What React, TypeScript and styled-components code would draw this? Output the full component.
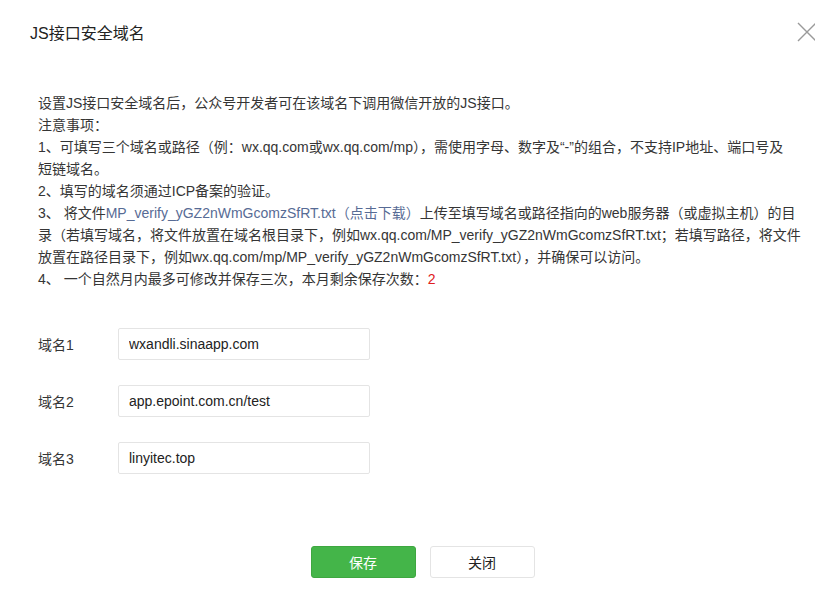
import styled, { createGlobalStyle } from "styled-components";

const Global = createGlobalStyle`
	body {
		margin: 0;
		background: #fff;
		font-family: "Liberation Sans", "Noto Sans CJK SC", sans-serif;
		color: #353535;
	}
`;

const fields = ["wxandli.sinaapp.com", "app.epoint.com.cn/test", "linyitec.top"];

function App() {
	return (
		<Dialog>
			<Global />
			<Header>
				<h3>JS接口安全域名</h3>
				<Close aria-label="关闭">
					<svg width="20" height="20" viewBox="0 0 20 20">
						<path d="M1 1L19 19M19 1L1 19" stroke="#9a9a9a" strokeWidth="1.4" fill="none" />
					</svg>
				</Close>
			</Header>
			<Notice>
				<Line>设置JS接口安全域名后，公众号开发者可在该域名下调用微信开放的JS接口。</Line>
				<Line>注意事项：</Line>
				<Line>1、可填写三个域名或路径（例：wx.qq.com或wx.qq.com/mp），需使用字母、数字及“-”的组合，不支持IP地址、端口号及</Line>
				<Line>短链域名。</Line>
				<Line>2、填写的域名须通过ICP备案的验证。</Line>
				<Line>
					3、 将文件<Link>MP_verify_yGZ2nWmGcomzSfRT.txt（点击下载）</Link>上传至填写域名或路径指向的web服务器（或虚拟主机）的目
				</Line>
				<Line>录（若填写域名，将文件放置在域名根目录下，例如wx.qq.com/MP_verify_yGZ2nWmGcomzSfRT.txt；若填写路径，将文件</Line>
				<Line>放置在路径目录下，例如wx.qq.com/mp/MP_verify_yGZ2nWmGcomzSfRT.txt），并确保可以访问。</Line>
				<Line>
					4、 一个自然月内最多可修改并保存三次，本月剩余保存次数：<Count>2</Count>
				</Line>
			</Notice>
			<Form>
				{fields.map((v, i) => (
					<Row key={i}>
						<Label>域名{i + 1}</Label>
						<Input defaultValue={v} />
					</Row>
				))}
			</Form>
			<Footer>
				<Button $primary>保存</Button>
				<Button>关闭</Button>
			</Footer>
		</Dialog>
	);
}

const Dialog = styled.div`
	width: 815px;
	height: 597px;
	display: flex;
	flex-direction: column;
	overflow: hidden;
`;

const Header = styled.div`
	display: flex;
	justify-content: space-between;
	align-items: center;
	padding: 20px 0 0 30px;
	height: 24px;
	h3 {
		margin: 0;
		font-size: 16px;
		font-weight: 400;
		color: #222;
	}
`;

const Close = styled.button`
	border: 0;
	background: none;
	padding: 0;
	margin-right: 0;
	width: 20px;
	height: 20px;
	position: relative;
	left: 2px;
`;

const Notice = styled.div`
	padding: 48px 0 0 38px;
	font-size: 14px;
	line-height: 22px;
	color: #353535;
`;

const Line = styled.div`
	white-space: nowrap;
`;

const Link = styled.span`
	color: #576b95;
`;

const Count = styled.span`
	color: #e15f63;
	color: #e02020;
`;

const Form = styled.div`
	padding: 38px 0 0 38px;
	display: flex;
	flex-direction: column;
	gap: 25px;
`;

const Row = styled.div`
	display: flex;
	align-items: center;
`;

const Label = styled.label`
	width: 80px;
	font-size: 14px;
	color: #353535;
`;

const Input = styled.input`
	box-sizing: border-box;
	width: 252px;
	height: 32px;
	border: 1px solid #e4e4e4;
	border-radius: 2px;
	padding: 0 10px;
	font: 14px "Liberation Sans", "Noto Sans CJK SC", sans-serif;
	color: #222;
	outline: none;
`;

const Footer = styled.div`
	margin-top: auto;
	padding-bottom: 19px;
	display: flex;
	justify-content: center;
	gap: 14px;
	padding-left: 30px;
`;

const Button = styled.button<{ $primary?: boolean }>`
	width: 105px;
	height: 32px;
	border-radius: 3px;
	font: 14px "Noto Sans CJK SC", sans-serif;
	border: 1px solid ${(p) => (p.$primary ? "#3ea740" : "#e4e4e4")};
	background: ${(p) => (p.$primary ? "#44b549" : "#fff")};
	color: ${(p) => (p.$primary ? "#fff" : "#222")};
`;

export default App;
